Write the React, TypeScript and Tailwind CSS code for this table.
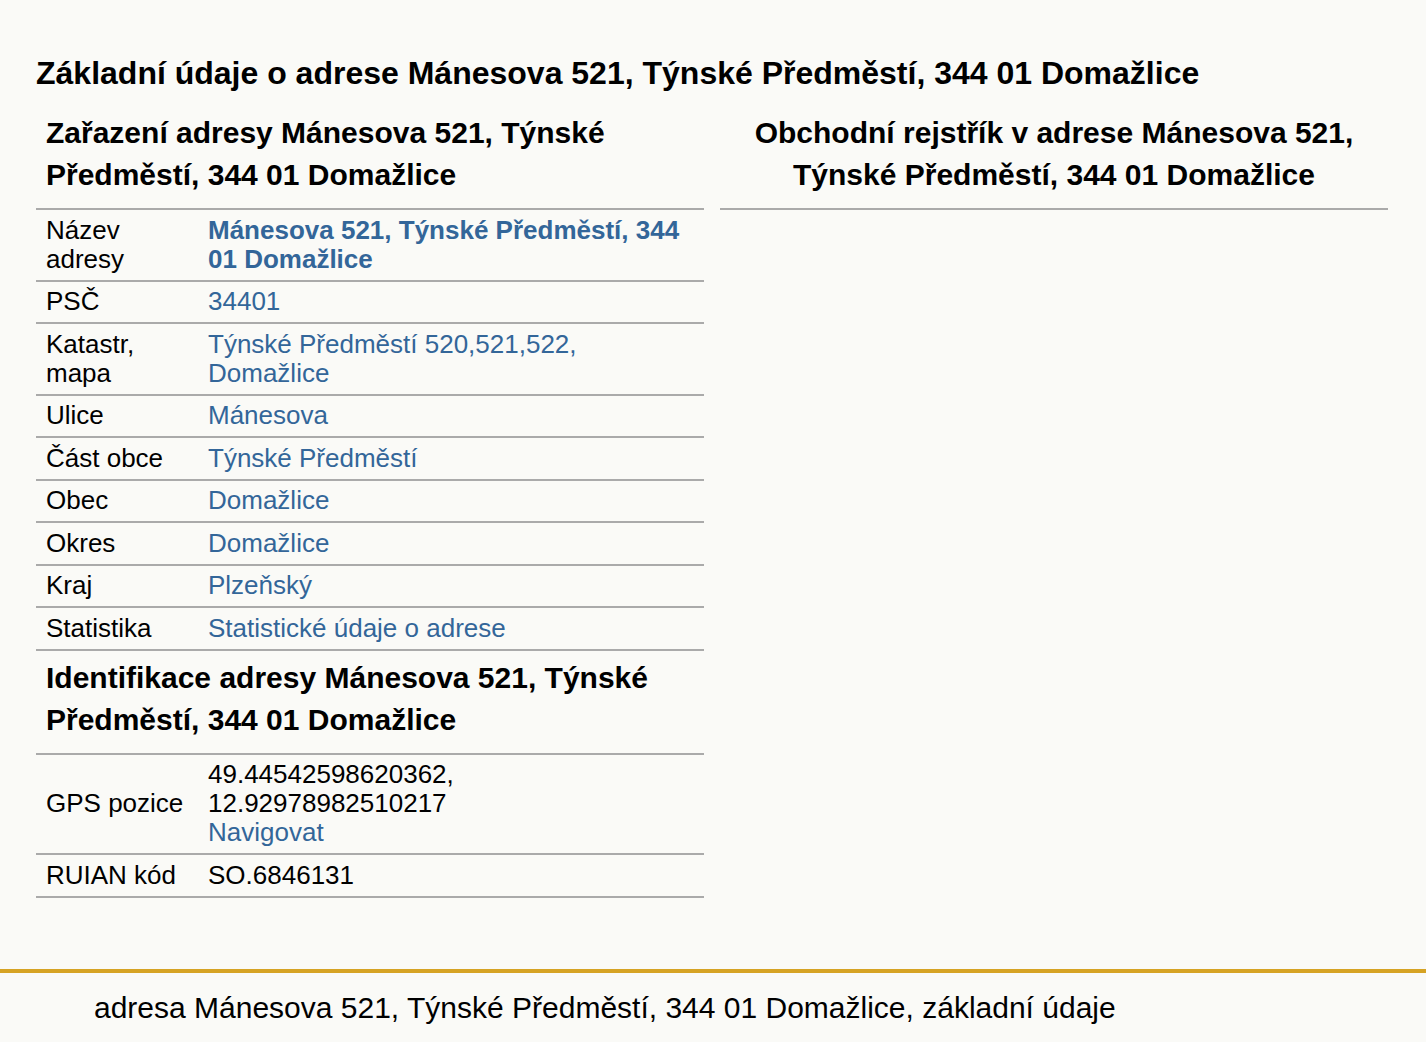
const font = { fontFamily: '"Liberation Sans", Arial, sans-serif' };

type Row = { label: React.ReactNode; value: React.ReactNode };

function InfoTable({ rows }: { rows: Row[] }) {
  return (
    <div className="border-t-2 border-[#aaaaaa]">
      {rows.map((r, i) => (
        <div key={i} className="grid grid-cols-[162px_1fr] items-center border-b-2 border-[#aaaaaa]">
          <div className="px-[10px] py-[5.75px]">{r.label}</div>
          <div className="px-[10px] py-[5.75px]">{r.value}</div>
        </div>
      ))}
    </div>
  );
}

function L({ children, bold }: { children: React.ReactNode; bold?: boolean }) {
  return <a href="#" className={"text-[#336699] " + (bold ? "font-bold" : "")}>{children}</a>;
}

export default function App() {
  const zarazeni: Row[] = [
    { label: <>Název<br />adresy</>, value: <L bold>Mánesova 521, Týnské Předměstí, 344<br />01 Domažlice</L> },
    { label: "PSČ", value: <L>34401</L> },
    { label: <>Katastr,<br />mapa</>, value: <L>Týnské Předměstí 520,521,522,<br />Domažlice</L> },
    { label: "Ulice", value: <L>Mánesova</L> },
    { label: "Část obce", value: <L>Týnské Předměstí</L> },
    { label: "Obec", value: <L>Domažlice</L> },
    { label: "Okres", value: <L>Domažlice</L> },
    { label: "Kraj", value: <L>Plzeňský</L> },
    { label: "Statistika", value: <L>Statistické údaje o adrese</L> },
  ];
  const ident: Row[] = [
    { label: "GPS pozice", value: <>49.44542598620362,<br />12.92978982510217<br /><L>Navigovat</L></> },
    { label: "RUIAN kód", value: "SO.6846131" },
  ];

  return (
    <div style={font} className="min-h-screen bg-[#fafaf7] text-black">
      <main className="pl-[36px] pr-[38px] pt-[52px]">
        <h1 className="text-[32px] font-bold leading-[42px]">
          Základní údaje o adrese Mánesova 521, Týnské Předměstí, 344 01 Domažlice
        </h1>
        <div className="grid grid-cols-2 gap-[16px] mt-[18px] text-[26px] leading-[29px]">
          <section>
            <h2 className="text-[30px] font-bold leading-[42px] px-[10px] pb-[12px]">
              Zařazení adresy Mánesova 521, Týnské<br />Předměstí, 344 01 Domažlice
            </h2>
            <InfoTable rows={zarazeni} />
            <h2 className="text-[30px] font-bold leading-[42px] px-[10px] pt-[6px] pb-[12px]">
              Identifikace adresy Mánesova 521, Týnské<br />Předměstí, 344 01 Domažlice
            </h2>
            <InfoTable rows={ident} />
          </section>
          <section>
            <h2 className="text-[30px] font-bold leading-[42px] text-center pb-[12px] border-b-2 border-[#aaaaaa]">
              Obchodní rejstřík v adrese Mánesova 521,<br />Týnské Předměstí, 344 01 Domažlice
            </h2>
          </section>
        </div>
      </main>
      <footer className="mt-[71px] border-t-4 border-[#d6a324] pl-[94px] pt-[18px] pb-[14px] text-[30px] leading-[34px]">
        adresa Mánesova 521, Týnské Předměstí, 344 01 Domažlice, základní údaje
      </footer>
    </div>
  );
}
